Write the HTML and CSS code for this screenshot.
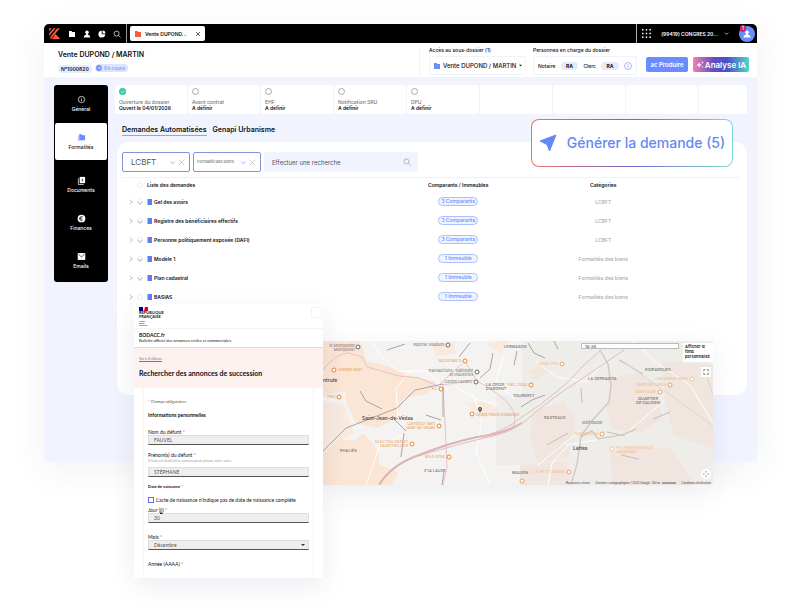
FILE: index.html
```html
<!DOCTYPE html>
<html lang="fr">
    <head>
        <meta charset="UTF-8">
        <meta name="viewport" content="width=device-width, initial-scale=1.0">
        <title>Vente DUPOND / MARTIN</title>
        <link rel="stylesheet" href="styles.css">
    </head>
    <body>
        <div class="stage">
            <div class="app">
                <!-- barre noire -->
                <div class="topbar">
                    <svg class="logo" viewBox="0 0 12 12"><path d="M1 1.200h2.400L1 4zM5 1.200h2L1 8.200V6zM8.600 1.200H11L3.500 10 1.500 10zM6.800 6.500L11.500 11H1l3.500-.8z" fill="#ff5a36"/></svg>
                    <nav class="tools">
                        <a href="#" aria-label="Dossiers"><svg viewBox="0 0 8 8"><path d="M1 1h2.500l.8 1H7v5H1z" fill="#fff"/></svg></a>
                        <a href="#" aria-label="Clients"><svg viewBox="0 0 8 8"><circle cx="4" cy="2.300" r="1.800" fill="#fff"/><path d="M.8 7.500c0-2 1-2.800 2.200-2.800V3.500h2v1.200c1.200 0 2.200.8 2.200 2.800z" fill="#fff"/></svg></a>
                        <a href="#" aria-label="Statistiques"><svg viewBox="0 0 8 8"><path d="M3.700.8v3.500h3.500A3.400 3.400 0 1 1 3.700.8z" fill="#fff"/><path d="M4.500.5a3.200 3.200 0 0 1 3 3h-3z" fill="#fff"/></svg></a>
                        <a href="#" aria-label="Recherche"><svg viewBox="0 0 8 8" fill="none" stroke="#fff" stroke-width=".7"><circle cx="3.600" cy="3.600" r="2.500"/><path d="M5.500 5.500l2 2"/></svg></a>
                    </nav>
                    <div class="doc-tab">
                        <svg viewBox="0 0 8 8"><path d="M1 1h2.500l.8 1H7v5H1z" fill="#ff5a36"/></svg>
                        <span>Vente DUPOND...</span>
                        <button class="icon-btn" aria-label="Fermer"><svg viewBox="0 0 6 6" fill="none" stroke="#222" stroke-width=".7"><path d="M1 1l4 4M5 1L1 5"/></svg></button>
                    </div>
                    <div class="account">
                        <svg class="apps" viewBox="0 0 9 9" fill="#fff"><path d="M0 0h1.500v1.500H0zM3.700 0h1.500v1.500H3.700zM7.400 0h1.500v1.500H7.400zM0 3.700h1.500v1.500H0zM3.700 3.700h1.500v1.500H3.700zM7.400 3.700h1.500v1.500H7.400zM0 7.400h1.500v1.500H0zM3.700 7.400h1.500v1.500H3.700zM7.400 7.400h1.500v1.500H7.400z"/></svg>
                        <button class="office">(99419) CONGRES 20... <svg viewBox="0 0 6 6" fill="none" stroke="#fff" stroke-width=".8"><path d="M1 2l2 2 2-2"/></svg></button>
                        <a class="avatar" href="#" aria-label="Profil">
                            <svg viewBox="0 0 8 8"><circle cx="4" cy="2.300" r="1.800" fill="#fff"/><path d="M.5 7.500c0-2 1-2.800 2.500-2.800V3.500h2v1.200c1.500 0 2.500.8 2.500 2.800z" fill="#fff"/></svg>
                            <span class="avatar-count">1</span>
                        </a>
                    </div>
                </div>

                <!-- titre du dossier -->
                <header class="header">
                    <div class="header-title">
                        <h1>Vente DUPOND / MARTIN</h1>
                        <span class="tag">N°1000820</span>
                        <span class="tag tag-blue"><svg viewBox="0 0 6 6"><circle cx="3" cy="3" r="2.900" fill="#6b8cff"/><path d="M1.500 3h3M3.300 1.800L4.500 3 3.300 4.200" fill="none" stroke="#fff" stroke-width=".6"/></svg>En cours</span>
                    </div>
                    <div class="header-block header-folder">
                        <label for="folder">Accès au sous-dossier (1)</label>
                        <div class="header-box">
                            <svg viewBox="0 0 8 8"><path d="M1 1h2.500l.8 1H7v5H1z" fill="#6b8cff"/></svg>
                            <select id="folder"><option>Vente DUPOND / MARTIN</option></select>
                            <svg class="caret" viewBox="0 0 4 4"><path d="M0 1h4L2 3z"/></svg>
                        </div>
                    </div>
                    <div class="header-block header-people">
                        <p>Personnes en charge du dossier</p>
                        <div class="header-box people">
                            <span>Notaire</span><b>RA</b>
                            <span>Clerc</span><b>RA</b>
                            <svg viewBox="0 0 8 8" fill="none" stroke="#6b8cff" stroke-width=".6"><circle cx="4" cy="4" r="3.500"/><path d="M4 3.500v2.400M4 2v.7"/></svg>
                        </div>
                    </div>
                    <div class="header-actions">
                        <button class="btn btn-blue">ac Produire</button>
                        <button class="btn btn-ai"><svg viewBox="0 0 8 8" fill="#fff"><path d="M3.200 1l.7 2.300 2.300.7-2.300.8-.7 2.300-.8-2.300L.2 4l2.200-.7zM6.500 0l.3 1.100 1.100.3-1.100.4-.3 1.100-.4-1.100L5 1.400l1.100-.3zM6.500 5l.2.800.8.200-.8.300-.2.800-.3-.8-.8-.3.800-.2z"/></svg>Analyse IA</button>
                    </div>
                </header>

                <div class="main">
                    <nav class="sidebar">
                        <a href="#"><svg viewBox="0 0 10 10" fill="none" stroke="#fff" stroke-width=".8"><circle cx="5" cy="5" r="3.500"/><path d="M5 4.500v2.300M5 3v.8"/></svg>Général</a>
                        <a href="#" class="active"><svg viewBox="0 0 10 10"><path d="M1 3h1v5.200h6V9H1z" fill="#a9bcff"/><path d="M2.500 1.500h2.700l.7 1H9v5.200H2.500z" fill="#6b8cff"/></svg>Formalités</a>
                        <a href="#"><svg viewBox="0 0 10 10"><path d="M3 1h6v7H3z" fill="#fff"/><path d="M1.500 2.500v7h6" fill="none" stroke="#fff" stroke-width=".8"/><path d="M6 3v3M5 4.500h2" stroke="#000" stroke-width=".6"/></svg>Documents</a>
                        <a href="#"><svg viewBox="0 0 10 10"><circle cx="5" cy="5" r="4.300" fill="#fff"/><path d="M6.500 3.300a2.200 2.200 0 1 0 0 3.400M3 4.500h2.500M3 5.500h2.500" fill="none" stroke="#000" stroke-width=".8"/></svg>Finances</a>
                        <a href="#"><svg viewBox="0 0 10 10"><path d="M.8 1.200h8.400v7.600H.8z" fill="#fff"/><path d="M1.500 2.500L5 5.500l3.500-3" fill="none" stroke="#000" stroke-width=".7"/></svg>Emails</a>
                    </nav>

                    <div class="content">
                        <ol class="steps">
                            <li><i class="dot done"><svg viewBox="0 0 7 7" fill="none" stroke="#fff" stroke-width=".8"><path d="M2 3.600l1.100 1.100L5 2.600"/></svg></i><span>Ouverture du dossier</span><b>Ouvert le 04/01/2026</b></li>
                            <li><i class="dot"></i><span>Avant contrat</span><b>A définir</b></li>
                            <li><i class="dot"></i><span>EHF</span><b>A définir</b></li>
                            <li><i class="dot"></i><span>Notification SRU</span><b>A définir</b></li>
                            <li><i class="dot"></i><span>DPU</span><b>A définir</b></li>
                            <li></li>
                            <li></li>
                            <li></li>
                            <li class="cut"></li>
                        </ol>

                        <div class="tabs">
                            <a href="#" class="current">Demandes Automatisées</a>
                            <a href="#">Genapi Urbanisme</a>
                        </div>

                        <section class="panel">
                            <div class="filters">
                                <div class="filter filter-big">
                                    <select aria-label="Catégorie"><option>LCBFT</option></select>
                                    <svg viewBox="0 0 6 6" fill="none" stroke="#6b8cff" stroke-width=".8"><path d="M.5 2L3 4.300 5.500 2"/></svg>
                                    <button class="icon-btn" aria-label="Effacer"><svg viewBox="0 0 6 6" fill="none" stroke="#aaa" stroke-width=".5"><path d="M.5.5l5 5M5.500.5l-5 5"/></svg></button>
                                </div>
                                <div class="filter">
                                    <select aria-label="Formalité"><option>Formalité des biens</option></select>
                                    <svg viewBox="0 0 6 6" fill="none" stroke="#6b8cff" stroke-width=".8"><path d="M.5 2L3 4.300 5.500 2"/></svg>
                                    <button class="icon-btn" aria-label="Effacer"><svg viewBox="0 0 6 6" fill="none" stroke="#aaa" stroke-width=".5"><path d="M.5.5l5 5M5.500.5l-5 5"/></svg></button>
                                </div>
                                <div class="search">
                                    <input type="text" placeholder="Effectuer une recherche" aria-label="Effectuer une recherche">
                                    <svg viewBox="0 0 8 8" fill="none" stroke="#999" stroke-width=".7"><circle cx="3.500" cy="3.500" r="2.500"/><path d="M5.400 5.400l2 2"/></svg>
                                </div>
                            </div>

                            <table class="requests">
                                <thead>
                                    <tr><th class="col-name"><div class="name"><span class="arrow"></span><input type="checkbox" aria-label="Tout sélectionner">Liste des demandes</div></th><th class="col-people">Comparants / Immeubles</th><th class="col-cat">Catégories</th><th></th></tr>
                                </thead>
                                <tbody>
                                    <tr><td><div class="name"><span class="arrow"></span><input type="checkbox" class="on" aria-label="Gel des avoirs"><i class="file"></i>Gel des avoirs</div></td><td><a href="#" class="pill">3 Comparants</a></td><td class="cat">LCBFT</td><td></td></tr>
                                    <tr><td><div class="name"><span class="arrow"></span><input type="checkbox" class="on" aria-label="Registre"><i class="file"></i>Registre des bénéficiaires effectifs</div></td><td><a href="#" class="pill">3 Comparants</a></td><td class="cat">LCBFT</td><td></td></tr>
                                    <tr><td><div class="name"><span class="arrow"></span><input type="checkbox" class="on" aria-label="Personne exposée"><i class="file"></i>Personne politiquement exposée (DAFI)</div></td><td><a href="#" class="pill">3 Comparants</a></td><td class="cat">LCBFT</td><td></td></tr>
                                    <tr><td><div class="name"><span class="arrow"></span><input type="checkbox" class="on" aria-label="Modèle 1"><i class="file"></i>Modèle 1</div></td><td><a href="#" class="pill">1 Immeuble</a></td><td class="cat">Formalités des biens</td><td></td></tr>
                                    <tr><td><div class="name"><span class="arrow"></span><input type="checkbox" class="on" aria-label="Plan cadastral"><i class="file"></i>Plan cadastral</div></td><td><a href="#" class="pill">1 Immeuble</a></td><td class="cat">Formalités des biens</td><td></td></tr>
                                    <tr><td><div class="name"><span class="arrow"></span><input type="checkbox" aria-label="BASIAS"><i class="file"></i>BASIAS</div></td><td><a href="#" class="pill">1 Immeuble</a></td><td class="cat">Formalités des biens</td><td></td></tr>
                                </tbody>
                            </table>
                        </section>
                    </div>
                </div>
            </div>

            <button class="generate">
                <svg viewBox="0 0 18 18"><path d="M17 1L1 7l7 3.500L10.500 17z" fill="#6488f5" stroke="#6488f5" stroke-linejoin="round"/></svg>
                Générer la demande (5)
            </button>

            <!-- carte -->
            <div class="map">
                <svg class="map-canvas" viewBox="0 0 391 144" preserveAspectRatio="xMidYMid slice">
                    <rect width="391" height="144" fill="#f4f3f2"/>
                    <g fill="#fbe5d4">
                        <path d="M0 0h38l7 20 20 5 25 10 24 6-8 12-24 4-8 20-18 10-22-5-9-18-2-14-23 6z"/>
                        <path d="M0 112l18-14 14 2 10-8 15 20 0 12 20 8-8 12H0z"/>
                        <path d="M0 60l22 4 10 28L0 108z" opacity=".6"/>
                        <path d="M110 5l22-5 2 12-20 3zM165 3l10-3 14 0-10 12zM144 62l18-2 16 10-18 9zM205 30l18-7 4 8-14 8z" opacity=".7"/>
                    </g>
                    <g fill="#f6e8df">
                        <path d="M290 36l26-4 20 12 4 34-20 14-30-4-6-20z"/>
                        <path d="M340 20l51 4v84l-40-14-8-34z"/>
                        <path d="M210 70l32-10 12 20-8 36-30 6-8-24z"/>
                        <path d="M288 110l60-4 26 38H290zM198 124l48-4 2 24h-50z"/>
                    </g>
                    <path d="M174 54v70h24v20h193V0H200v54z" fill="#e9e3df" opacity=".4"/>
                    <g fill="none" stroke="#fff" stroke-width="1">
                        <path d="M50 0l8 14 18 16 28 0 22 20M134 46l20 12 22 6M44 144l14-40 26-12M88 30l-14 18 2 30M150 52l10 26-6 34 14 32M182 14l-8 26 18 18M214 20l20 16 30 5 18-20M258 90l-42 34M342 60l-40 34-58 10M310 0l28 24 30 20 23 38M226 144l4-22 18-20"/>
                    </g>
                    <g fill="none" stroke="#dfbab7" stroke-width=".8">
                        <path d="M0 30q14-18 26-18l14 4 5 10 32 9 20 2 21 9"/>
                        <path d="M118 43l25-23 12 20q26 14 34 26 8 12 0 24"/>
                        <path d="M120 44l33-5"/>
                        <path d="M121 44l3 58 1 24-4 18"/>
                    </g>
                    <path d="M57 144q12-20 40-30 30-12 58-18 26-3 45-14" fill="none" stroke="#dcb2b2" stroke-width="2"/>
                    <path d="M155 96q26-4 45-20Q240 50 262 24L278 10" fill="none" stroke="#e2bdbe" stroke-width="1"/>
                    <path d="M90 117q32-10 72-20 24-4 40-16 30-26 56-42L302 9" fill="none" stroke="#e2bdbe" stroke-width="1"/>
                    <g fill="none" stroke="#989190" stroke-width=".8">
                        <path d="M0 111l24-24 21-8 30-12 18-18 28-6"/>
                        <path d="M72 78l12 12M38 50l6 10 16 8M82 92l-3 24M121 46l0 30M122 130l-2 14M137 16l11-14M171 12l-3 16-10 9M195 10l-3 14M65 9l18-6M104 74l15 5"/>
                        <path d="M206 2l6 10 11 5M232 0l4 8M199 66q10-8 24-12"/>
                    </g>
                    <g fill="none" stroke="#b9b1ad" stroke-width=".8">
                        <path d="M259 47l1 15M297 19l24 14M331 78l17-7M225 104l21-12M285 91l18 4M299 114l18 4"/>
                    </g>
                    <g fill="none" stroke="#d2cac5" stroke-width="1.500">
                        <path d="M278 9l8 14 3 22-2 16-18 20-10 14-4 28-6 21"/>
                        <path d="M258 96l12-6 6 8 24-4 14-6"/>
                    </g>
                    <g class="roads-thin">
                        <path d="M299 19l34 24 58 42M391 54l-6-18"/>
                    </g>
                    <g class="pins">
                        <circle class="pin-dark" cx="36" cy="6" r="2"/><circle class="pin-dark" cx="126" cy="4" r="2"/><circle class="pin-dark" cx="155" cy="31" r="2"/><circle class="pin-dark" cx="154" cy="41" r="2"/>
                        <circle cx="12" cy="29" r="2"/><circle cx="17" cy="56" r="2"/><circle cx="143" cy="20" r="2"/><circle cx="119" cy="48" r="2"/><circle cx="150" cy="73" r="2"/><circle cx="117" cy="85" r="2"/><circle cx="90" cy="103" r="2"/><circle cx="127" cy="116" r="2"/><circle cx="209" cy="44" r="2"/>
                        <circle class="pin-soft" cx="240" cy="23" r="2"/><circle class="pin-soft" cx="348" cy="44" r="2"/><circle class="pin-soft" cx="338" cy="51" r="2"/><circle class="pin-soft" cx="280" cy="93" r="2"/><circle class="pin-soft" cx="247" cy="131" r="2"/><circle class="pin-soft" cx="200" cy="140" r="2"/>
                        <circle class="pin-pale" cx="370" cy="38" r="2"/><circle class="pin-pale" cx="290" cy="108" r="2"/>
                    </g>
                    <path d="M158 72c-.3-2-2-2.500-2-4a2 2 0 1 1 4 0c0 1.500-1.700 2-2 4z" fill="#444"/><circle cx="158" cy="68" r=".7" fill="#fff"/>
                    <g class="town">
                        <text x="40" y="79">Saint-Jean-de-Védas</text>
                        <text x="1" y="41">ntrute</text>
                        <text x="251" y="109">Lattes</text>
                    </g>
                    <g class="area">
                        <text x="182" y="7">LERMASON</text><text x="164" y="45">LA CROIX</text><text x="164" y="49">D'ARGENT</text><text x="191" y="56">TOURNEZY</text><text x="18" y="111">PHALIÈS</text><text x="102" y="131">Z'IA LAUZE</text><text x="190" y="133">MAURIN</text><text x="222" y="78">RASTEAUX</text><text x="266" y="39">LA CERRADITA</text><text x="323" y="30">BOIRARGUES</text><text x="316" y="59">QUARTIER</text><text x="314" y="63">DE GAUSSIN</text><text x="260" y="83">Golf Ouest</text>
                    </g>
                    <g class="poi-dark">
                        <text class="end" x="33" y="6">st Montpellier</text><text class="end" x="33" y="10">Montpellier</text><text class="end" x="122" y="5">Reprise Stadium</text><text class="end" x="151" y="31">Transactions - Bâtiment</text><text class="end" x="151" y="35">et Industries</text><text class="end" x="150" y="42">Centre Leclerc</text>
                    </g>
                    <g class="poi">
                        <text x="16" y="30">Grande 5001</text><text class="end" x="14" y="57">Parc</text><text class="end" x="139" y="21">McDonald's</text><text class="end" x="115" y="49">K2</text><text x="154" y="75">Grand Plaza restaurant</text><text class="end" x="113" y="84">Carrefour Sant</text><text class="end" x="113" y="88">Jean-de-Védas</text><text class="end" x="86" y="102">ELECTRO DEPOT</text><text class="end" x="86" y="106">MONTPELLIER</text><text class="end" x="123" y="117">IKEA Drive</text><text class="end" x="205" y="45">Parc 2000</text>
                    </g>
                    <g class="poi poi-soft">
                        <text class="end" x="236" y="24">Green Prix</text><text class="end" x="344" y="45">Castelets Lattes</text><text class="end" x="334" y="52">Géant Bowl</text><text class="end" x="276" y="94">Roselyne 34</text><text class="end" x="243" y="132">LE PETIT Monde</text><text x="294" y="108">Pro Assainissement</text><text x="294" y="112">Languedoc</text><text class="end" x="366" y="39">Castorama Lattes</text>
                    </g>
                    <g class="legend">
                        <text x="268" y="143">Raccourcis clavier</text><text x="328" y="143">Données cartographiques ©2025 Google</text><text x="338" y="143">500 m</text><text x="389" y="143">Conditions d'utilisation</text>
                        <path d="M340 142h14" stroke="#333" stroke-width=".8"/>
                    </g>
                </svg>
                <input class="map-search" type="text" value="10-34" aria-label="Adresse">
                <button class="map-layer">Afficher le fond personnalisé</button>
                <button class="map-btn map-full" aria-label="Plein écran"><svg viewBox="0 0 8 8" fill="none" stroke="#555"><path d="M1 3V1h2M5 1h2v2M7 5v2H5M3 7H1V5"/></svg></button>
                <button class="map-btn map-center" aria-label="Recentrer"><svg viewBox="0 0 8 8" fill="#666"><path d="M4 0l1.300 1.700H2.700zM4 8l1.300-1.700H2.700zM0 4l1.700-1.300v2.600zM8 4L6.300 2.700v2.600z"/></svg></button>
            </div>

            <!-- formulaire BODACC -->
            <div class="bodacc">
                <div class="bodacc-head">
                    <div class="marianne">
                        <svg viewBox="0 0 10 4"><path d="M0 0h4v4H0z" fill="#000091"/><path d="M6 0h3v4H5z" fill="#e1000f"/></svg>
                        <b>RÉPUBLIQUE<br>FRANÇAISE</b>
                        <small>Liberté<br>Égalité<br>Fraternité</small>
                    </div>
                    <button class="menu" aria-label="Menu"></button>
                </div>
                <div class="bodacc-name">
                    <strong>BODACC.fr</strong>
                    <p>Bulletin officiel des annonces civiles et commerciales</p>
                </div>
                <div class="bodacc-band">
                    <a href="#">Voir le fil d'Ariane</a>
                    <h2>Rechercher des annonces de succession</h2>
                </div>
                <form class="bodacc-form">
                    <p class="req-note"><em>*</em> Champs obligatoires</p>
                    <h3>Informations personnelles</h3>
                    <div class="field">
                        <label for="nom">Nom du défunt <em>*</em></label>
                        <input id="nom" type="text" value="FAUVEL">
                    </div>
                    <div class="field">
                        <label for="prenom">Prénom(s) du défunt <em>*</em></label>
                        <small>Si l'état civil du défunt ne contient pas de prénom, saisir « sans »</small>
                        <input id="prenom" type="text" value="STÉPHANE">
                    </div>
                    <h4>Date de naissance <em>*</em></h4>
                    <div class="check">
                        <input id="incomplet" type="checkbox">
                        <label for="incomplet">L'acte de naissance n'indique pas de date de naissance complète</label>
                    </div>
                    <div class="field">
                        <label for="jour">Jour (<u>jj</u>) <em>*</em></label>
                        <input id="jour" type="text" value="30">
                    </div>
                    <div class="field field-month">
                        <label for="mois">Mois <em>*</em></label>
                        <span class="month"><select id="mois"><option>Décembre</option></select><svg viewBox="0 0 4 4"><path d="M0 1h4L2 3z" fill="#333"/></svg></span>
                    </div>
                    <p class="year">Année (AAAA) <em>*</em></p>
                </form>
            </div>
        </div>
    </body>
</html>
```
FILE: styles.css
```css
*{
    box-sizing: border-box;
}

body{
    margin: 0;
    background-color: #fff;
    color: #111;
    font-family: Inter, "Open Sans", sans-serif;
    font-size: 5px;
    line-height: 6px;
}

h1, h2, h3, h4, p, ol{
    margin: 0;
    padding: 0;
}

a{
    color: inherit;
    text-decoration: none;
}

button, input, select{
    margin: 0;
    padding: 0;
    border: none;
    border-radius: 0;
    background: none;
    color: inherit;
    font: inherit;
    outline: none;
}

select, input[type="checkbox"]{
    appearance: none;
}

svg{
    display: block;
    flex: none;
}

.stage{
    position: relative;
    min-height: 613px;
    padding: 24px 43px 0 44px;
}

.app{
    background-color: #f1f3ff;
    border-radius: 5px 5px 0 0;
    box-shadow: 0 8px 36px rgba(40, 50, 100, .07);
}

/* barre noire */
.topbar{
    display: flex;
    align-items: center;
    height: 19px;
    padding-left: 4px;
    background-color: #000;
    border-radius: 5px 5px 0 0;
    color: #fff;
}

.logo{
    width: 13px;
    height: 13px;
}

.tools{
    display: flex;
    gap: 7px;
    height: 19px;
    align-items: center;
    padding: 0 5px 0 7px;
    border-right: 1px solid #999;
}

.tools svg{
    width: 8px;
    height: 8px;
}

.icon-btn svg{
    width: 6px;
    height: 6px;
}

.doc-tab{
    display: flex;
    align-items: center;
    width: 75px;
    height: 15px;
    margin-left: 3px;
    padding: 0 4px;
    gap: 3px;
    background-color: #fff;
    border-radius: 2px;
    color: #111;
    font-weight: 600;
}

.doc-tab svg{
    width: 8px;
    height: 8px;
}

.doc-tab span{
    flex: 1;
}

.doc-tab .icon-btn svg{
    width: 6px;
    height: 6px;
}

.account{
    display: flex;
    align-items: center;
    height: 19px;
    margin-left: auto;
    padding: 0 2px 0 5px;
    border-left: 1px solid #aaa;
}

.apps{
    width: 9px;
    height: 9px;
}

.office{
    display: flex;
    align-items: center;
    gap: 6px;
    margin: 0 10px 0 10px;
    font-weight: 600;
}

.office svg{
    width: 5px;
    height: 5px;
}

.avatar{
    position: relative;
    display: flex;
    align-items: center;
    justify-content: center;
    width: 16px;
    height: 16px;
    border-radius: 50%;
    background-color: #6b8cff;
}

.avatar svg{
    width: 8px;
    height: 8px;
}

.avatar-count{
    position: absolute;
    top: -1px;
    left: 1px;
    width: 6px;
    height: 7px;
    border-radius: 3px;
    background-color: #d3246b;
    text-align: center;
    line-height: 7px;
}

/* titre du dossier */
.header{
    display: flex;
    align-items: flex-start;
    height: 34px;
    padding: 4px 8px 0 14px;
    background-color: #fff;
}

.header-title{
    flex: 1;
}

.header h1{
    margin: 3px 0 5px;
    font-size: 7px;
    line-height: 9px;
    font-weight: 600;
}

.tag{
    display: inline-flex;
    align-items: center;
    gap: 2px;
    height: 8px;
    margin-right: 2px;
    padding: 0 3px;
    border-radius: 4px;
    background-color: #e6ebff;
    font-weight: 600;
}

.tag-blue{
    padding-left: 1px;
    background-color: #dce4ff;
    color: #86a0f8;
}

.tag svg{
    width: 6px;
    height: 6px;
}

.header-block{
    font-weight: 500;
}

.header-folder{
    padding-left: 9px;
    margin-right: 7px;
    border-left: 1px solid #f1f3fb;
}

.header-block label,
.header-block p{
    display: block;
    line-height: 7px;
}

.header-box{
    display: flex;
    align-items: center;
    height: 19px;
    margin-top: 2px;
    padding: 0 4px;
    border: 1px solid #f1f3fb;
    border-radius: 2px;
}

.header-folder .header-box{
    width: 97px;
    gap: 2px;
    padding: 0 3px;
}

.header-box svg{
    width: 8px;
    height: 8px;
}

.header-box select{
    flex: 1;
    min-width: 0;
    font-size: 6px;
    line-height: 8px;
    font-weight: 500;
}

.header-box .caret{
    width: 3px;
    height: 3px;
}

.people{
    width: 104px;
    justify-content: space-between;
}

.people b{
    padding: 1px 5px;
    border-radius: 4px;
    background-color: #e6e9fb;
}

.header-actions{
    display: flex;
    gap: 5px;
    margin: 10px 0 0 9px;
}

.btn{
    display: flex;
    align-items: center;
    justify-content: center;
    height: 15px;
    border-radius: 2px;
    color: #fff;
    font-weight: 600;
}

.btn-blue{
    width: 42px;
    background-color: #6b8cff;
    font-size: 6px;
}

.btn-ai{
    width: 56px;
    gap: 1px;
    background-image: linear-gradient(90deg, #f27fb0, #6a4fc0 35%, #4a4fc4 60%, #4fd6cf);
    font-size: 8px;
}

.btn-ai svg{
    width: 8px;
    height: 8px;
}

.main{
    display: flex;
    gap: 7px;
    padding: 8px 10px 66px;
}

.sidebar{
    display: flex;
    flex-direction: column;
    align-self: flex-start;
    width: 54px;
    height: 197px;
    padding: 0 1px 3px;
    border-radius: 3px;
    background-color: #000;
    color: #fff;
    font-weight: 500;
}

.sidebar a{
    display: flex;
    flex-direction: column;
    align-items: center;
    justify-content: center;
    gap: 2px;
    flex: 1;
}

.sidebar svg{
    width: 9px;
    height: 9px;
}

.sidebar .active{
    margin-bottom: 6px;
    border-radius: 2px;
    background-color: #fff;
    color: #111;
}

.content{
    flex: 1;
    min-width: 0;
}

.steps{
    display: flex;
    gap: 1px;
    list-style: none;
}

.steps li{
    flex: 64;
    height: 29px;
    padding: 3px 4px;
    background-color: #fff;
    border-radius: 2px;
}

.steps .cut{
    flex: 40;
}

.steps span,
.steps b{
    display: block;
    font-weight: 500;
    color: #777;
    white-space: nowrap;
}

.steps b{
    font-weight: 600;
    color: #111;
}

.dot{
    display: block;
    width: 7px;
    height: 7px;
    margin-bottom: 4px;
    border: 1px solid #aaa;
    border-radius: 50%;
}

.done{
    border: none;
    background-color: #3ac9a5;
}

.tabs{
    display: flex;
    gap: 6px;
    padding: 11px 7px 6px;
    font-size: 7px;
    line-height: 10px;
    font-weight: 600;
}

.tabs a{
    border-bottom: 1px solid transparent;
}

.tabs .current{
    border-color: #8ca3f8;
}

.panel{
    margin-left: 2px;
    padding: 10px 8px 89px 5px;
    background-color: #fff;
    border-radius: 12px;
}

.filters{
    display: flex;
    gap: 3px;
    padding-bottom: 5px;
    border-bottom: 1px solid #f1f2f8;
}

.filter{
    display: flex;
    align-items: center;
    gap: 3px;
    width: 68px;
    height: 20px;
    padding: 0 4px 0 3px;
    border: 1px solid #8793d8;
    border-radius: 2px;
    color: #555;
    font-size: 4px;
}

.filter select{
    flex: 1;
    min-width: 0;
}

.filter-big{
    padding-left: 8px;
    font-size: 8px;
    line-height: 10px;
}

.filter > svg{
    width: 5px;
    height: 5px;
}

.filter .icon-btn svg{
    width: 7px;
    height: 7px;
}

.search{
    display: flex;
    align-items: center;
    width: 154px;
    padding: 0 7px 0 8px;
    border-radius: 3px;
    background-color: #f1f3ff;
}

.search input{
    flex: 1;
    min-width: 0;
    font-size: 6px;
}

.search input::placeholder{
    color: #555;
    opacity: 1;
}

.search svg{
    width: 8px;
    height: 8px;
}

/* liste des demandes */
.requests{
    width: 100%;
    border-collapse: collapse;
    table-layout: fixed;
    text-align: center;
    font-weight: 600;
}

.requests th,
.requests td{
    height: 19px;
    padding: 0;
}

.requests th{
    height: 14px;
    font-weight: 600;
}

.col-name{
    width: 43%;
}

.col-people{
    width: 23%;
}

.col-cat{
    width: 24%;
}

.name{
    display: flex;
    align-items: center;
    padding-left: 6px;
}

.arrow{
    width: 4px;
    height: 4px;
    margin-right: 5px;
    border: solid #ccc;
    border-width: 1px 1px 0 0;
    transform: rotate(45deg);
}

th .arrow{
    visibility: hidden;
}

.name input{
    display: flex;
    justify-content: center;
    width: 6px;
    height: 6px;
    margin-right: 4px;
    border: 1px solid #eef0f8;
    border-radius: 50%;
}

.name .on::after{
    content: '';
    width: 3px;
    height: 3px;
    border: solid #bcc6e6;
    border-width: 0 1px 1px 0;
    transform: rotate(45deg);
}

.name .file{
    width: 5px;
    height: 6px;
    margin-right: 2px;
    background-color: #5b7ff5;
    border-left: 1px solid #a9bcff;
}

.pill{
    display: block;
    width: 40px;
    margin: 0 auto;
    border: 1px solid #aebfff;
    border-radius: 5px;
    background-color: #eff3ff;
    color: #6b8cff;
    line-height: 7px;
    font-weight: 500;
}

.requests .cat{
    color: #aaa;
    font-weight: 500;
}

.generate{
    position: absolute;
    top: 119px;
    right: 67px;
    display: flex;
    align-items: center;
    justify-content: center;
    gap: 10px;
    width: 202px;
    height: 48px;
    border: 1px solid transparent;
    border-radius: 8px;
    background: linear-gradient(#fff, #fff) padding-box, linear-gradient(90deg, #f0716c, #7468c8 50%, #7fdcd6) border-box;
    color: #6488f5;
    font-size: 14px;
    line-height: 16px;
    font-weight: 500;
    white-space: nowrap;
}

.generate svg{
    width: 18px;
    height: 18px;
}

/* carte */
.map{
    position: absolute;
    top: 341px;
    left: 322px;
    right: 87px;
    height: 144px;
    box-shadow: 0 8px 28px rgba(40, 50, 100, .08);
}

.map-canvas{
    width: 100%;
    height: 100%;
}

.map text{
    font-size: 4px;
}

.map .end{
    text-anchor: end;
}

.map .town text{
    font-size: 5px;
    font-weight: 500;
    fill: #444;
}

.area text{
    font-weight: 500;
    fill: #777;
}

.poi text{
    fill: #ea9a50;
}

.poi-soft text{
    fill: #efb988;
}

.poi-dark text{
    fill: #796f6b;
}

.map .legend text{
    font-family: "Liberation Sans", sans-serif;
    font-size: 3px;
    text-anchor: end;
    fill: #444;
}

.roads-thin{
    fill: none;
    stroke: #ded5d0;
}

.pins circle{
    fill: #fff;
    stroke: #e9862c;
}

.pins .pin-dark{
    stroke: #666;
}

.pins .pin-soft{
    stroke: #eaa162;
}

.pins .pin-pale{
    stroke: #efc49d;
}

.map-search{
    position: absolute;
    top: 2px;
    right: 34px;
    width: 98px;
    height: 6px;
    padding-left: 3px;
    border: 1px solid #bbb;
    background-color: #fff;
    font-size: 4px;
    line-height: 4px;
}

.map-layer{
    position: absolute;
    top: 2px;
    right: 0;
    width: 30px;
    padding: 1px 2px 3px;
    background-color: #fff;
    text-align: left;
    font-size: 4px;
    line-height: 5px;
    font-weight: 600;
}

.map-btn{
    position: absolute;
    right: 2px;
    padding: 2px;
    background-color: #fff;
}

.map-btn svg{
    width: 6px;
    height: 6px;
}

.map-full{
    top: 26px;
}

.map-center{
    bottom: 6px;
    border-radius: 50%;
}

/* formulaire BODACC */
.bodacc{
    position: absolute;
    top: 304px;
    left: 134px;
    width: 189px;
    min-height: 274px;
    background-color: #fff;
    box-shadow: 0 8px 24px rgba(40, 50, 100, .09);
    font-family: Lato, "Noto Sans", sans-serif;
}

.bodacc em{
    color: #d33;
    font-style: normal;
}

.bodacc-head{
    display: flex;
    justify-content: space-between;
    height: 25px;
    padding: 3px 1px 0 5px;
    border-bottom: 1px solid #f3f3f3;
}

.marianne svg{
    width: 10px;
    height: 4px;
}

.marianne b,
.marianne small{
    display: block;
    font-size: 4px;
    line-height: 4px;
}

.marianne small{
    font-size: 2px;
    line-height: 2px;
    margin-top: 1px;
    font-style: italic;
}

.menu{
    width: 11px;
    height: 11px;
    border: 1px solid #f3f3f3;
}

.bodacc-name{
    height: 18px;
    padding: 3px 5px 0;
    font-size: 4px;
}

.bodacc-name strong{
    display: block;
    font-size: 5px;
}

.bodacc-band{
    height: 41px;
    padding: 8px 5px 0;
    border-top: 1px solid #f3d3cf;
    background-color: #fef2f1;
}

.bodacc-band a{
    display: block;
    color: #777;
    font-size: 3px;
    text-decoration: underline;
}

.bodacc-band h2{
    margin-top: 7px;
    font-size: 7px;
    line-height: 9px;
}

.bodacc-form{
    margin: 0 9px;
    padding: 11px 4px 8px;
    border: solid #f5f5f8;
    border-width: 0 1px;
    font-size: 5px;
}

.req-note{
    color: #555;
    font-size: 4px;
}

.bodacc-form h3{
    margin: 7px 0 11px;
    font-size: 5px;
    line-height: 6px;
}

.field label,
.field small{
    display: block;
}

.field small{
    color: #999;
    font-size: 3px;
    line-height: 6px;
    margin-bottom: 3px;
}

.field{
    margin-bottom: 7px;
}

.field input,
.field select{
    display: block;
    width: 100%;
    height: 10px;
    padding: 0 5px;
    border: 1px solid #ddd;
    border-bottom-color: #555;
    background-color: #eee;
    color: #555;
}

.bodacc-form h4{
    font-size: 4px;
    line-height: 6px;
}

.check{
    display: flex;
    align-items: center;
    gap: 2px;
    margin: 7px 0 4px;
}

.check input{
    width: 6px;
    height: 6px;
    border: 1px solid #6a6af4;
}

.field-month{
    margin-top: 11px;
    margin-bottom: 11px;
}

.month{
    display: flex;
    align-items: center;
}

.month svg{
    width: 4px;
    height: 4px;
    margin-left: -8px;
}
```
